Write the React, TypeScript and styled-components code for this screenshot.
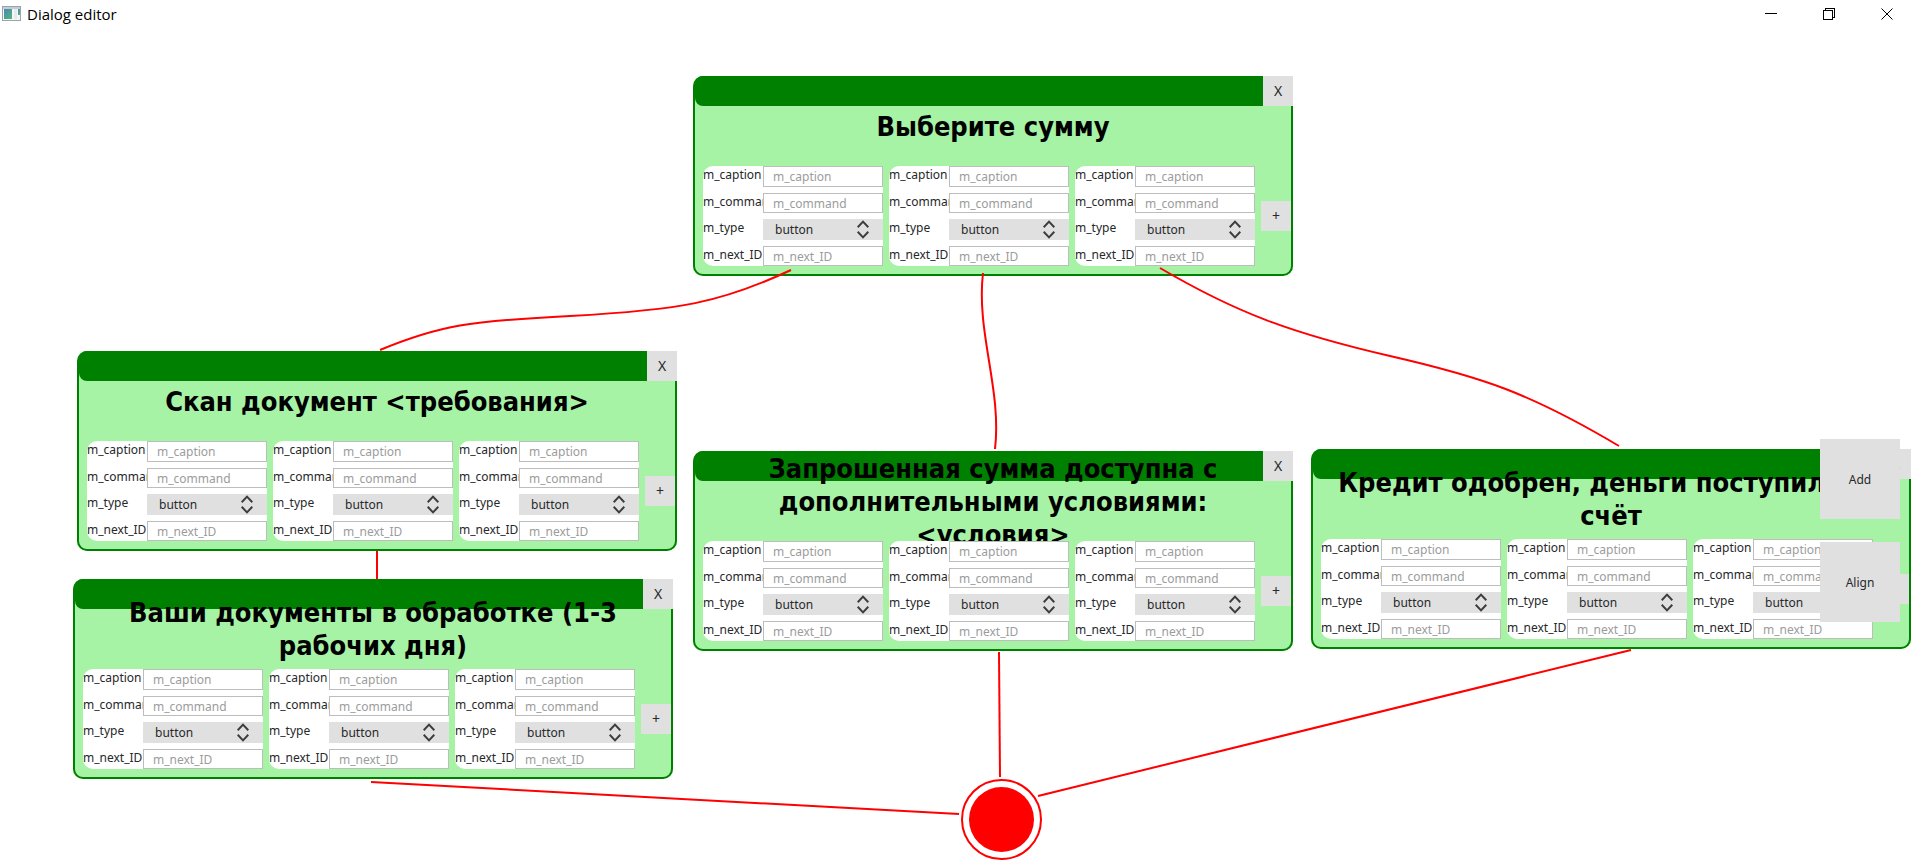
import React from "react";
import styled, { createGlobalStyle } from "styled-components";

const GlobalStyle = createGlobalStyle`
  *, *::before, *::after {
    box-sizing: border-box;
  }
  body {
    margin: 0;
    background: #ffffff;
    color: #26282a;
    font-family: "Noto Sans", "Open Sans", sans-serif;
    font-size: 12px;
  }
  button, input, select {
    margin: 0;
    font: inherit;
    color: inherit;
  }
`;

const Window = styled.div`
  display: flex;
  flex-direction: column;
  min-height: 100vh;
  overflow: hidden;
`;

const TitleBar = styled.header`
  display: flex;
  align-items: center;
  height: 30px;
  padding: 0 4px 2px 2px;
`;

const WindowTitle = styled.h1`
  flex: 1;
  margin: 0 0 0 5px;
  font: 400 15px/28px "Open Sans", "Noto Sans", sans-serif;
  color: #000000;
`;

const WindowButton = styled.button`
  display: flex;
  align-items: center;
  justify-content: center;
  width: 58px;
  height: 28px;
  padding: 0;
  border: 0;
  background: transparent;
`;

const Canvas = styled.main`
  position: relative;
  flex: 1;
`;

const Edges = styled.svg`
  position: absolute;
  inset: 0;
  width: 100%;
  height: 100%;
  overflow: visible;
  pointer-events: none;
  fill: none;
  stroke: #ff0000;
  stroke-width: 2;
`;

const Node = styled.section<{ $x: number; $y: number }>`
  position: absolute;
  left: ${(p) => p.$x}px;
  top: ${(p) => p.$y}px;
  width: 600px;
  padding-bottom: 10px;
  border-radius: 10px;
  background: #a6f3a6;
  box-shadow: inset 0 0 0 2px #008000;
`;

const NodeBar = styled.div`
  display: flex;
  justify-content: flex-end;
  height: 30px;
  margin-left: 2px;
  border-radius: 8px 0 0 8px;
  background: #008000;
`;

const SquareButton = styled.button`
  flex: none;
  width: 30px;
  height: 30px;
  padding: 0 0 1px;
  border: 0;
  background: #e0e0e0;
  font-size: 14px;
`;

const NodeTitle = styled.h2`
  display: flex;
  align-items: center;
  justify-content: center;
  height: 60px;
  margin: 0;
  padding: 0 20px 20px;
  font: 700 27px/33px "DejaVu Sans Condensed", "DejaVu Sans", sans-serif;
  text-align: center;
  color: #000000;
`;

const Options = styled.div`
  position: relative;
  display: flex;
  align-items: center;
  gap: 6px;
  padding-left: 10px;
`;

const Option = styled.div`
  display: grid;
  grid-template-columns: 60px 120px;
  grid-template-rows: 21px 20px 21px 20px;
  row-gap: 6px;
  border-radius: 10px 0 0 10px;
  background: #ffffff;
`;

const Label = styled.label`
  overflow: hidden;
  line-height: 18px;
  white-space: nowrap;
`;

const TextField = styled.input`
  width: 100%;
  min-width: 0;
  height: 100%;
  padding: 0 9px;
  border: 1px solid #bdbdbd;
  border-radius: 0;
  outline: 0;
  background: #ffffff;
  &::placeholder {
    color: #9b9c9c;
    opacity: 1;
  }
`;

const SelectBox = styled.div`
  position: relative;
  height: 100%;
  background: #e0e0e0;
  svg {
    position: absolute;
    right: 14px;
    top: 1px;
    pointer-events: none;
  }
`;

const Select = styled.select`
  width: 100%;
  height: 100%;
  padding: 0 30px 0 12px;
  border: 0;
  border-radius: 0;
  background: transparent;
  appearance: none;
`;

const EndNode = styled.div<{ $x: number; $y: number }>`
  position: absolute;
  left: ${(p) => p.$x}px;
  top: ${(p) => p.$y}px;
  width: 81px;
  height: 81px;
  padding: 6px;
  border: 2px solid #ff0000;
  border-radius: 50%;
  &::before {
    content: "";
    display: block;
    height: 100%;
    border-radius: 50%;
    background: #ff0000;
  }
`;

const Actions = styled.nav`
  position: absolute;
  right: 20px;
  top: 409px;
  display: flex;
  flex-direction: column;
  gap: 23px;
`;

const ActionButton = styled.button`
  width: 80px;
  height: 80px;
  padding: 0;
  border: 0;
  background: #e0e0e0;
`;

const nodes = [
  { id: "sum", x: 693, y: 46, title: "Выберите сумму" },
  { id: "scan", x: 77, y: 321, title: "Скан документ <требования>" },
  { id: "processing", x: 73, y: 549, title: "Ваши документы в обработке (1-3 рабочих дня)" },
  { id: "terms", x: 693, y: 421, title: "Запрошенная сумма доступна с дополнительными условиями: <условия>" },
  { id: "approved", x: 1311, y: 419, title: "Кредит одобрен, деньги поступили на счёт" },
];

const edges = [
  "M791 240 C720 273 680 280 570 286 C470 291 440 295 380 320",
  "M983 243 C976 302 1002 360 995 419",
  "M1160 238 C1235 282 1290 303 1390 326 C1482 347 1530 363 1619 416",
  "M377 521 V549",
  "M371 752 L959 784",
  "M999 622 L1000 747",
  "M1631 620 L1038 766",
];

function AppIcon() {
  return (
    <svg width="20" height="16" viewBox="0 0 20 16" aria-hidden="true">
      <defs>
        <linearGradient id="pane" x1="0" y1="0" x2="1" y2="1">
          <stop offset="0" stopColor="#4a86b8" />
          <stop offset="1" stopColor="#55b577" />
        </linearGradient>
      </defs>
      <rect x="0.5" y="0.5" width="18" height="14" fill="#f4f6f7" stroke="#9aa3ab" />
      <path d="M1 2h17" stroke="#c3ccd4" strokeWidth="2" />
      <rect x="2" y="3" width="8" height="10" fill="url(#pane)" />
      <rect x="12" y="3" width="3" height="10" fill="#e6eaec" />
      <rect x="16" y="3" width="2" height="6" fill="url(#pane)" />
    </svg>
  );
}

function OptionForm({ id }: { id: string }) {
  return (
    <Option>
      <Label htmlFor={`${id}-caption`}>m_caption</Label>
      <TextField id={`${id}-caption`} placeholder="m_caption" />
      <Label htmlFor={`${id}-command`}>m_command</Label>
      <TextField id={`${id}-command`} placeholder="m_command" />
      <Label htmlFor={`${id}-type`}>m_type</Label>
      <SelectBox>
        <Select id={`${id}-type`} defaultValue="button">
          <option value="button">button</option>
        </Select>
        <svg width="12" height="19" viewBox="0 0 12 19" fill="none" stroke="#3a3c3e" strokeWidth="2" aria-hidden="true">
          <path d="M0.7 7.2 L6 1.6 L11.3 7.2 M0.7 11.8 L6 17.4 L11.3 11.8" />
        </svg>
      </SelectBox>
      <Label htmlFor={`${id}-next`}>m_next_ID</Label>
      <TextField id={`${id}-next`} placeholder="m_next_ID" />
    </Option>
  );
}

export default function App() {
  return (
    <Window>
      <GlobalStyle />
      <TitleBar>
        <AppIcon />
        <WindowTitle>Dialog editor</WindowTitle>
        <WindowButton aria-label="Minimize">
          <svg width="12" height="12" stroke="#000" shapeRendering="crispEdges">
            <path d="M0 5.5h12" />
          </svg>
        </WindowButton>
        <WindowButton aria-label="Restore">
          <svg width="12" height="12" stroke="#000" fill="none" shapeRendering="crispEdges">
            <path d="M0.5 2.5h9v9h-9z M2.5 2.5v-2h9v9h-2" />
          </svg>
        </WindowButton>
        <WindowButton aria-label="Close">
          <svg width="12" height="12" stroke="#000">
            <path d="M0.5 0.5l11 11M11.5 0.5l-11 11" />
          </svg>
        </WindowButton>
      </TitleBar>
      <Canvas>
        {nodes.map((n) => (
          <Node key={n.id} $x={n.x} $y={n.y}>
            <NodeBar>
              <SquareButton aria-label="Remove node">X</SquareButton>
            </NodeBar>
            <NodeTitle>{n.title}</NodeTitle>
            <Options>
              {[1, 2, 3].map((i) => (
                <OptionForm key={i} id={`${n.id}-${i}`} />
              ))}
              <SquareButton aria-label="Add option">+</SquareButton>
            </Options>
          </Node>
        ))}
        <Edges aria-hidden="true">
          {edges.map((d) => (
            <path key={d} d={d} />
          ))}
        </Edges>
        <EndNode $x={961} $y={749} />
        <Actions>
          <ActionButton>Add</ActionButton>
          <ActionButton>Align</ActionButton>
        </Actions>
      </Canvas>
    </Window>
  );
}
